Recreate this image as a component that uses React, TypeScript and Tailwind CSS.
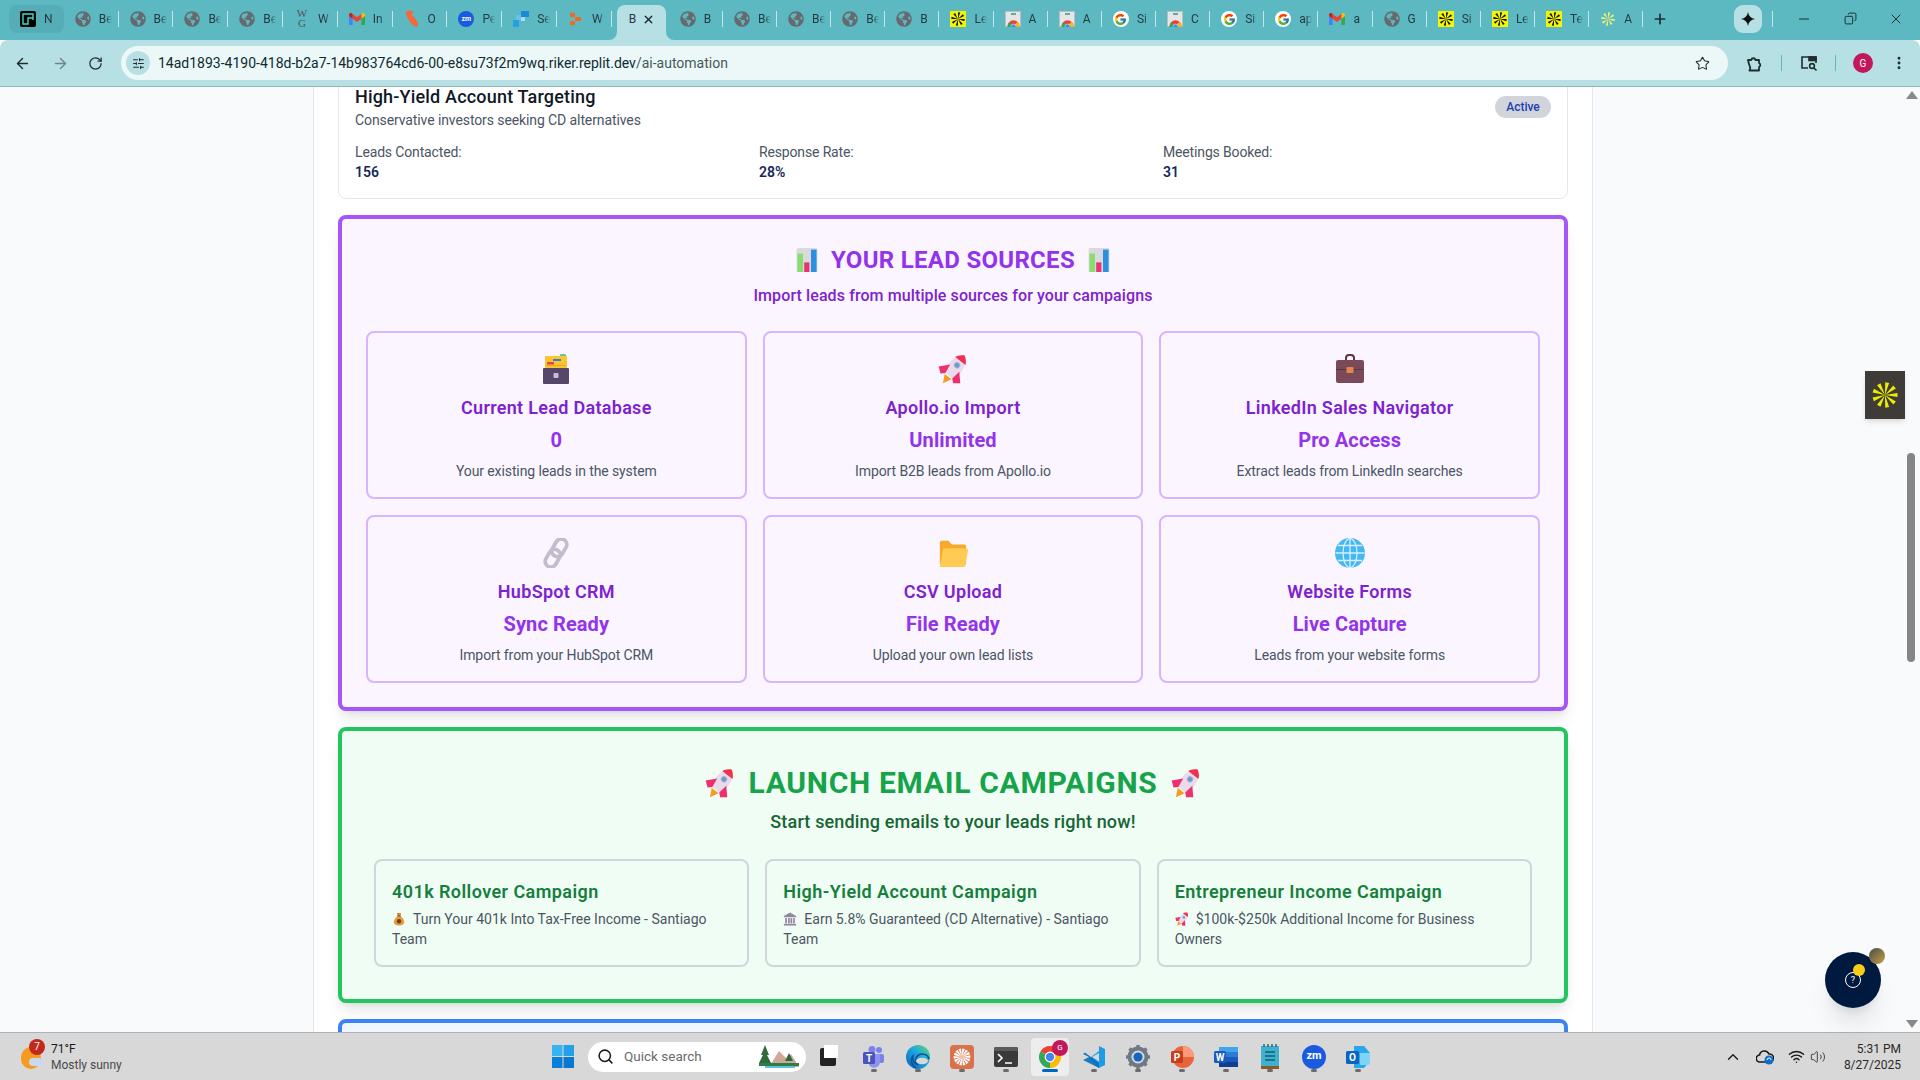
import React from 'react';
import { FaGlobeAmericas } from 'react-icons/fa';
import { FcGoogle } from 'react-icons/fc';
import { ArrowLeft, ArrowRight, RotateCw, Star, MoreVertical, Plus, Minus, X, Copy, ChevronUp, Wifi, Volume2, Search, SlidersHorizontal } from 'lucide-react';

const Spokes = ({ color, size, n = 8, bg }: { color: string; size: number; n?: number; bg?: string }) => (
  <svg width={size} height={size} viewBox="0 0 24 24">
    {bg ? <rect width="24" height="24" fill={bg} /> : null}
    {Array.from({ length: n }).map((_, i) => (
      <polygon key={i} points="12,12 10.4,2 13.6,2" fill={color} transform={`rotate(${(360 / n) * i + 10} 12 12)`} />
    ))}
  </svg>
);

const ChromeLogo = ({ size }: { size: number }) => (
  <svg width={size} height={size} viewBox="0 0 24 24">
    <path d="M12 12L2.47 6.5A11 11 0 0 1 21.53 6.5Z" fill="#ea4335" />
    <path d="M12 12L21.53 6.5A11 11 0 0 1 12 23Z" fill="#fbbc04" />
    <path d="M12 12L12 23A11 11 0 0 1 2.47 6.5Z" fill="#34a853" />
    <circle cx="12" cy="12" r="5.4" fill="#fff" />
    <circle cx="12" cy="12" r="4.2" fill="#4285f4" />
  </svg>
);

const Gmail = ({ size }: { size: number }) => (
  <svg width={size} height={size} viewBox="0 0 24 24">
    <path fill="#4285f4" d="M0 7.64v11.73C0 20.27.73 21 1.64 21h3.82v-9.27z" />
    <path fill="#34a853" d="M18.55 21h3.82c.9 0 1.63-.73 1.63-1.64V7.64l-5.45 4.09z" />
    <path fill="#fbbc04" d="M18.55 4.64v7.09L24 7.64V5.46c0-2.02-2.31-3.18-3.93-1.96z" />
    <path fill="#ea4335" d="M5.46 11.73V4.64L12 9.55l6.55-4.91v7.09L12 16.64z" />
    <path fill="#c5221f" d="M0 5.46v2.18l5.46 4.09V4.64L3.93 3.49C2.31 2.28 0 3.43 0 5.46z" />
  </svg>
);

const Doc = () => (
  <div className="relative w-[16px] h-[16px] bg-[#e6e6e6] border border-[#bdbdbd]">
    <div className="absolute left-[5px] top-[1px] w-[5px] h-[2px] bg-[#5fa8a0]" />
    <svg className="absolute left-[1px] top-[5px]" width="13" height="10" viewBox="0 0 24 18">
      <path d="M1 18A11 11 0 0 1 12 6A11 11 0 0 1 23 18H18A6 6 0 0 0 6 18Z" fill="#ea4335" />
      <path d="M23 18A11 11 0 0 0 19 9L15 13A6 6 0 0 1 18 18Z" fill="#fbbc04" />
      <path d="M1 18A11 11 0 0 1 5 9L9 13A6 6 0 0 0 6 18Z" fill="#34a853" />
      <circle cx="12" cy="17" r="4" fill="#4285f4" />
    </svg>
  </div>
);

const tabIcon = (k: string) => {
  switch (k) {
    case 'n':
      return (
        <div className="w-[16px] h-[16px] bg-black rounded-[2px] flex items-center justify-center">
          <svg width="12" height="12" viewBox="0 0 12 12" fill="none" stroke="#3fd9c8" strokeWidth="1.4"><path d="M11 7V1H1v10h5V5h5" /></svg>
        </div>
      );
    case 'globe':
      return <FaGlobeAmericas size={16} color="#666a6e" />;
    case 'wg':
      return (
        <div className="w-[16px] h-[22px] flex flex-col items-center font-['Liberation_Serif',serif] text-[11px] leading-[10px] text-[#555]">
          <span>W</span>
          <span>G</span>
        </div>
      );
    case 'gmail':
      return <Gmail size={16} />;
    case 'flame':
      return (
        <svg width="16" height="18" viewBox="0 0 16 18"><path d="M2 3C2 1 5 0 8 1C11 2 9 4 7 4C9 6 12 9 14 13C15 16 12 18 10 16C7 13 2 8 2 3Z" fill="#f4683c" /></svg>
      );
    case 'zm':
      return (
        <div className="w-[16px] h-[16px] rounded-full bg-[#1a5ae0] flex items-center justify-center text-white text-[7px] font-bold leading-none">zm</div>
      );
    case 'sq':
      return (
        <svg width="16" height="16" viewBox="0 0 16 16">
          <rect x="8" y="0" width="8" height="6" fill="#1a8ad8" />
          <rect x="3" y="4" width="5" height="5" fill="#6cc0ee" />
          <rect x="0" y="9" width="6" height="7" fill="#2a9fe0" />
          <rect x="8" y="6" width="4" height="4" fill="#a8dcf5" />
        </svg>
      );
    case 'w':
      return (
        <svg width="12" height="12" viewBox="0 0 12 12"><rect x="0" y="0" width="5" height="4" fill="#f26a21" /><rect x="5" y="4" width="6" height="4" fill="#f26a21" /><rect x="0" y="8" width="5" height="4" fill="#f26a21" /></svg>
      );
    case 'yellow':
      return <Spokes color="#111" size={16} bg="#f5f500" />;
    case 'doc':
      return <Doc />;
    case 'g':
      return (
        <div className="w-[16px] h-[16px] rounded-full bg-white flex items-center justify-center"><FcGoogle size={13} /></div>
      );
    case 'ast':
      return <Spokes color="#f2f56a" size={16} />;
    default:
      return null;
  }
};

const tabsBefore = [
  ['n', 'N'], ['globe', 'Be'], ['globe', 'Be'], ['globe', 'Be'], ['globe', 'Be'], ['wg', 'W'], ['gmail', 'In'], ['flame', 'O'], ['zm', 'Pe'], ['sq', 'Se'], ['w', 'W'],
];
const tabsAfter = [
  ['globe', 'B'], ['globe', 'Be'], ['globe', 'Be'], ['globe', 'Be'], ['globe', 'B'], ['yellow', 'Le'], ['doc', 'A'], ['doc', 'A'], ['g', 'Si'], ['doc', 'C'], ['g', 'Si'], ['g', 'ap'], ['gmail', 'a'], ['globe', 'G'], ['yellow', 'Si'], ['yellow', 'Le'], ['yellow', 'Te'], ['ast', 'A'],
];

const Tab = ({ icon, label, w, first }: { icon: string; label: string; w: string; first?: boolean }) => (
  <div className={`${w} h-[28px] flex items-center shrink-0 relative ${first ? 'bg-[#55aeb7] rounded-lg' : ''}`}>
    <div className="w-[16px] h-[16px] ml-[11px] flex items-center justify-center shrink-0">{tabIcon(icon)}</div>
    <span className="ml-[8px] w-[13px] overflow-hidden text-[12px] text-[#27393d] whitespace-nowrap [mask-image:linear-gradient(to_right,#000_55%,transparent)]">{label}</span>
    {first ? null : <span className="absolute right-0 top-[6px] w-[1px] h-[16px] bg-[#c4e6ea]" />}
  </div>
);

const BarChartE = ({ s }: { s: number }) => (
  <svg width={s} height={s} viewBox="3 1 26 30">
    <rect x="3" y="1" width="26" height="30" rx="2" fill="#d9d9de" />
    <rect x="4" y="8" width="7" height="23" fill="#8bdc6e" />
    <rect x="12.5" y="19" width="6.5" height="12" fill="#e6356f" />
    <rect x="21" y="3" width="7" height="28" fill="#2b90e0" />
  </svg>
);
const FileBoxE = ({ s }: { s: number }) => (
  <svg width={s} height={s} viewBox="2 1 28 30">
    <rect x="20" y="1" width="6" height="4" rx="1" fill="#6cc48c" />
    <rect x="5" y="3" width="22" height="15" fill="#fbc531" />
    <rect x="13" y="6" width="8" height="2" fill="#3a7bd5" />
    <rect x="7" y="9" width="7" height="2.5" fill="#e8404f" />
    <rect x="6" y="12" width="20" height="1" fill="#e8a81e" />
    <rect x="3" y="15" width="26" height="16" rx="1" fill="#56466a" />
    <rect x="13.5" y="20" width="5" height="5" rx="1" fill="#c9bcd8" />
  </svg>
);
const RocketE = ({ s }: { s: number }) => (
  <svg width={s} height={s} viewBox="1 2 28 28">
    <g transform="rotate(38 16 16) translate(16 0) scale(1.35 1) translate(-16 0)">
      <path d="M16 0C22 5 22 16 20 24H12C10 16 10 5 16 0Z" fill="#e9dbe9" />
      <path d="M16 0C18.5 2 20 4.5 20.4 6.5H11.6C12 4.5 13.5 2 16 0Z" fill="#f2304f" />
      <ellipse cx="16" cy="11.5" rx="2.2" ry="2.9" fill="#b9a6c6" />
      <ellipse cx="16" cy="11.5" rx="1.5" ry="2" fill="#5aa1e0" />
      <path d="M12 15L6.5 23L10.5 27L13 24Z" fill="#f0306e" />
      <path d="M20 15L25.5 23L21.5 27L19 24Z" fill="#f0306e" />
      <path d="M13 25H19L16 33Z" fill="#f59a23" />
    </g>
  </svg>
);
const BriefcaseE = ({ s }: { s: number }) => (
  <svg width={s} height={s} viewBox="1 2 30 30">
    <path d="M12 9V5.5A3 3 0 0 1 15 3h2a3 3 0 0 1 3 2.5V9" fill="none" stroke="#5b3742" strokeWidth="2" />
    <rect x="2" y="8" width="28" height="23" rx="2" fill="#7b4a5a" />
    <rect x="2" y="17" width="28" height="1" fill="#5b3742" />
    <rect x="12.5" y="15" width="7" height="6" rx="1" fill="#e0894a" />
  </svg>
);
const LinkE = ({ s }: { s: number }) => (
  <svg width={s} height={s} viewBox="0 0 32 32" fill="none" stroke="#c4bccd" strokeWidth="4">
    <rect x="13.5" y="0.5" width="12" height="20" rx="6" transform="rotate(30 19.5 10.5)" />
    <rect x="6.5" y="11.5" width="12" height="20" rx="6" transform="rotate(30 12.5 21.5)" />
  </svg>
);
const FolderE = ({ s }: { s: number }) => (
  <svg width={s} height={s} viewBox="0 0 32 32">
    <path d="M2 5a2 2 0 0 1 2-2h7l4 4h13a2 2 0 0 1 2 2v18a2 2 0 0 1-2 2H4a2 2 0 0 1-2-2Z" fill="#f7a92b" />
    <path d="M5 13a2 2 0 0 1 2-2h23a2 2 0 0 1 2 2l-3 16a2 2 0 0 1-2 2H2Z" fill="#ffcb52" />
  </svg>
);
const GlobeE = ({ s }: { s: number }) => (
  <svg width={s} height={s} viewBox="1 1 30 30" fill="none" stroke="#d4f1fd" strokeWidth="1.3">
    <circle cx="16" cy="16" r="15" fill="#45b7f2" stroke="none" />
    <ellipse cx="16" cy="16" rx="7" ry="14.5" />
    <path d="M16 1.5v29M1.5 16h29M4 8.5h24M4 23.5h24" />
  </svg>
);
const MoneyE = ({ s }: { s: number }) => (
  <svg width={s} height={s} viewBox="0 0 32 32">
    <path d="M11 2h10l-2 7h-6Z" fill="#d98a3a" />
    <path d="M13 9h6c6 4 9 10 9 14 0 5-4 8-12 8S4 28 4 23c0-4 3-10 9-14Z" fill="#e99a3c" />
    <rect x="12" y="8" width="8" height="2" fill="#7a4a20" />
    <circle cx="16" cy="21" r="5" fill="#6b3f18" />
  </svg>
);
const BankE = ({ s }: { s: number }) => (
  <svg width={s} height={s} viewBox="0 0 32 32" fill="#93889f">
    <path d="M16 1L30 9V12H2V9Z" />
    <rect x="5" y="14" width="4" height="12" />
    <rect x="11.5" y="14" width="4" height="12" />
    <rect x="17" y="14" width="4" height="12" />
    <rect x="23" y="14" width="4" height="12" />
    <rect x="2" y="27" width="28" height="4" />
  </svg>
);

const sources = [
  { e: <FileBoxE s={30} />, t: 'Current Lead Database', v: '0', d: 'Your existing leads in the system' },
  { e: <RocketE s={30} />, t: 'Apollo.io Import', v: 'Unlimited', d: 'Import B2B leads from Apollo.io' },
  { e: <BriefcaseE s={30} />, t: 'LinkedIn Sales Navigator', v: 'Pro Access', d: 'Extract leads from LinkedIn searches' },
  { e: <LinkE s={30} />, t: 'HubSpot CRM', v: 'Sync Ready', d: 'Import from your HubSpot CRM' },
  { e: <FolderE s={30} />, t: 'CSV Upload', v: 'File Ready', d: 'Upload your own lead lists' },
  { e: <GlobeE s={30} />, t: 'Website Forms', v: 'Live Capture', d: 'Leads from your website forms' },
];

const campaigns = [
  { t: '401k Rollover Campaign', e: <MoneyE s={14} />, d: 'Turn Your 401k Into Tax-Free Income - Santiago Team' },
  { t: 'High-Yield Account Campaign', e: <BankE s={14} />, d: 'Earn 5.8% Guaranteed (CD Alternative) - Santiago Team' },
  { t: 'Entrepreneur Income Campaign', e: <RocketE s={14} />, d: '$100k-$250k Additional Income for Business Owners' },
];

const stats = [['Leads Contacted:', '156'], ['Response Rate:', '28%'], ['Meetings Booked:', '31']];

const Corner = ({ flip }: { flip?: boolean }) => (
  <svg className={`absolute bottom-0 ${flip ? 'right-[-8px] -scale-x-100' : 'left-[-8px]'}`} width="8" height="8" viewBox="0 0 8 8">
    <path d="M8 0V8H0A8 8 0 0 0 8 0Z" fill="#b7e0e4" />
  </svg>
);

const Dot = ({ active }: { active?: boolean }) => (
  <span className={`absolute bottom-[4px] left-1/2 -translate-x-1/2 h-[3px] rounded-full ${active ? 'w-[16px] bg-[#0067c0]' : 'w-[6px] bg-[#6b6b6b]'}`} />
);

const TaskIcon = ({ children, active }: { children: React.ReactNode; active?: boolean }) => (
  <div className={`relative w-[38px] h-[38px] mx-[3px] flex items-center justify-center rounded-[4px] shrink-0 ${active ? 'bg-[#ededed]' : ''}`}>
    {children}
    <Dot active={active} />
  </div>
);

export default function App() {
  return (
    <div className="w-[1920px] h-[1080px] flex flex-col overflow-hidden font-['Roboto',sans-serif] bg-white">
      {/* tab strip */}
      <div className="h-[40px] bg-[#5cb9c2] flex items-start pt-[5px] pl-[9px] shrink-0">
        {tabsBefore.map(([i, l], n) => (
          <Tab key={n} icon={i} label={l} w="w-[54.8px]" first={n === 0} />
        ))}
        <div className="relative w-[49px] ml-[5px] mr-[3px] h-[35px] bg-[#b7e0e4] rounded-t-lg flex items-start pt-[6px] shrink-0">
          <Corner />
          <Corner flip />
          <span className="ml-[12px] w-[11px] overflow-hidden text-[12px] leading-[16px] text-[#27393d]">B</span>
          <X size={13} className="ml-[2px] mt-[2px] text-[#1c2b2e]" strokeWidth={2.5} />
        </div>
        {tabsAfter.map(([i, l], n) => (
          <Tab key={n} icon={i} label={l} w="w-[54.15px]" />
        ))}
        <Plus size={16} strokeWidth={2.5} className="ml-[9px] mt-[6px] text-[#1f2d30] shrink-0" />
        <div className="ml-[66px] w-[28px] h-[28px] rounded-[9px] bg-[#b7e0e4] flex items-center justify-center shrink-0">
          <svg width="14" height="14" viewBox="0 0 14 14"><path d="M7 0C7.6 4 10 6.4 14 7C10 7.6 7.6 10 7 14C6.4 10 4 7.6 0 7C4 6.4 6.4 4 7 0Z" fill="#111" /></svg>
        </div>
        <span className="ml-[10px] mt-[6px] w-[1px] h-[16px] bg-[#c4e6ea] shrink-0" />
        <Minus size={16} className="ml-[23px] mt-[6px] text-[#1f2d30] shrink-0" strokeWidth={1.5} />
        <Copy size={13} className="ml-[32px] mt-[7px] text-[#1f2d30] shrink-0 -scale-x-100" strokeWidth={1.8} />
        <X size={16} className="ml-[31px] mt-[6px] text-[#1f2d30] shrink-0" strokeWidth={1.5} />
      </div>

      {/* toolbar */}
      <div className="h-[47px] bg-[#b7e0e4] border-b border-[#8fb5b9] flex items-center shrink-0 rounded-t-[8px]">
        <ArrowLeft size={17} className="ml-[14px] text-[#1f2d30]" strokeWidth={2} />
        <ArrowRight size={17} className="ml-[21px] text-[#6b8589]" strokeWidth={2} />
        <RotateCw size={15} className="ml-[19px] text-[#1f2d30]" strokeWidth={2} />
        <div className="ml-[18px] w-[1607px] h-[34px] bg-[#ecf8f8] rounded-full flex items-center">
          <div className="ml-[5px] w-[24px] h-[24px] rounded-full bg-[#b7e0e4] flex items-center justify-center">
            <SlidersHorizontal size={13} className="text-[#1f2d30]" />
          </div>
          <span className="ml-[8px] text-[14px] text-[#0f2a30] whitespace-nowrap">
            14ad1893-4190-418d-b2a7-14b983764cd6-00-e8su73f2m9wq.riker.replit.dev<span className="text-[#45585c]">/ai-automation</span>
          </span>
          <Star size={15} className="ml-auto mr-[18px] text-[#1f2d30]" strokeWidth={1.7} />
        </div>
        <svg className="ml-[18px]" width="17" height="17" viewBox="0 0 17 17" fill="none" stroke="#1f2d30" strokeWidth="1.8" strokeLinejoin="round">
          <path d="M2 5h3.2a2.2 2.2 0 0 1 4.3 0H13v3a2.2 2.2 0 0 1 0 4v3.5H3.5c1-2 1-3.5 0-5.2C2.8 9 2.4 7 2 5Z" />
        </svg>
        <span className="ml-[18px] w-[1px] h-[16px] bg-[#5cb9c2]" />
        <svg className="ml-[18px]" width="18" height="16" viewBox="0 0 18 16" fill="none" stroke="#1f2d30" strokeWidth="1.6">
          <path d="M8 13H2V2h14v6" />
          <rect x="9" y="2" width="7" height="3.5" fill="#1f2d30" />
          <circle cx="12" cy="11" r="2.4" />
          <path d="M14 13l2.5 2.5" />
        </svg>
        <span className="ml-[17px] w-[1px] h-[16px] bg-[#5cb9c2]" />
        <div className="ml-[17px] w-[20px] h-[20px] rounded-full bg-[#c2185b] flex items-center justify-center text-white text-[10px]">G</div>
        <MoreVertical size={16} className="ml-[18px] text-[#1f2d30]" strokeWidth={2.4} />
      </div>

      {/* page */}
      <div className="flex-1 min-h-0 flex relative bg-[#f9fafb]">
        <div className="w-[313px] shrink-0" />
        <main className="w-[1280px] shrink-0 bg-white border-x border-[#e5e7eb] px-6 overflow-hidden">
          <div className="-mt-[21px] flex flex-col gap-4">
            <div className="border border-[#e5e7eb] rounded-lg p-4 bg-white">
              <div className="flex items-center justify-between mb-3">
                <div>
                  <h3 className="text-lg font-medium text-[#111827] leading-[28px] tracking-[0.18px]">High-Yield Account Targeting</h3>
                  <p className="text-sm text-[#4b5563] -mt-[1px] tracking-[-0.1px]">Conservative investors seeking CD alternatives</p>
                </div>
                <span className="h-[22px] w-[56px] rounded-full bg-[#d1d5db] text-[#1e40af] text-xs font-medium flex items-center justify-center">Active</span>
              </div>
              <div className="grid grid-cols-3 gap-4 text-sm">
                {stats.map(([a, b]) => (
                  <div key={a}>
                    <div className="text-[#4b5563] tracking-[-0.15px]">{a}</div>
                    <div className="font-semibold text-[#14285a]">{b}</div>
                  </div>
                ))}
              </div>
            </div>

            <section className="border-4 border-[#a855f7] bg-[#faf5ff] rounded-lg p-6 shadow-lg">
              <h2 className="text-2xl font-bold text-[#9333ea] flex items-center justify-center gap-3 mb-2 pt-[1px] tracking-[0.3px]">
                <BarChartE s={24} /> YOUR LEAD SOURCES <BarChartE s={24} />
              </h2>
              <p className="text-center font-medium text-[#7e22ce] mb-[23px] tracking-[0.1px]">Import leads from multiple sources for your campaigns</p>
              <div className="grid grid-cols-3 gap-4">
                {sources.map((s) => (
                  <div key={s.t} className="border-2 border-[#d8b4fe] rounded-lg p-4 text-center h-[168px]">
                    <div className="h-[36px] mb-[9px] pt-[3px] flex items-center justify-center">{s.e}</div>
                    <div className="text-lg font-semibold text-[#7e22ce] mb-1 tracking-[0.3px]">{s.t}</div>
                    <div className="text-xl font-bold text-[#9333ea] mb-[7px] tracking-[0.1px]">{s.v}</div>
                    <div className="text-sm text-[#4b5563] tracking-[-0.1px]">{s.d}</div>
                  </div>
                ))}
              </div>
            </section>

            <section className="border-4 border-[#22c55e] bg-[#f0fdf4] rounded-lg p-8 shadow-lg">
              <h2 className="text-3xl font-bold text-[#16a34a] flex items-center justify-center gap-[13px] mb-[7px] pt-[2px] tracking-[0.7px]">
                <RocketE s={30} /> LAUNCH EMAIL CAMPAIGNS <RocketE s={30} />
              </h2>
              <p className="text-center text-lg font-medium text-[#166534] mb-[23px] tracking-[0.16px]">Start sending emails to your leads right now!</p>
              <div className="grid grid-cols-3 gap-4">
                {campaigns.map((c) => (
                  <div key={c.t} className="border-2 border-[#d1d5db] rounded-lg p-4 h-[108px]">
                    <div className="text-lg font-semibold text-[#15803d] pt-[1px] tracking-[0.43px]">{c.t}</div>
                    <p className="text-sm text-[#4b5563] mt-[3px]">
                      <span className="inline-block align-[-2px] mr-[7px]">{c.e}</span>
                      {c.d}
                    </p>
                  </div>
                ))}
              </div>
            </section>

            <section className="border-4 border-[#3b82f6] bg-[#eff6ff] rounded-lg h-[200px]" />
          </div>
        </main>
        <div className="flex-1" />
        <div className="w-[17px] shrink-0 flex flex-col items-center justify-between py-[4px] relative">
          <span className="w-0 h-0 border-x-[6px] border-x-transparent border-b-[8px] border-b-[#8a8a8a]" />
          <span className="absolute left-[4px] top-[366px] w-[8px] h-[209px] rounded-full bg-[#858585]" />
          <span className="w-0 h-0 border-x-[6px] border-x-transparent border-t-[8px] border-t-[#8a8a8a]" />
        </div>

        {/* floating widgets */}
        <div className="absolute left-[1865px] top-[284px] w-[40px] h-[48px] bg-[#3f3b38] shadow-md flex items-center justify-center">
          <Spokes color="#ecec00" size={30} n={9} />
        </div>
        <div className="absolute left-[1825px] top-[865px] w-[56px] h-[56px] rounded-full bg-[#001a3f] shadow-xl flex items-center justify-center">
          <div className="relative w-[16px] h-[16px] rounded-full border border-white flex items-center justify-center text-white text-[9px] leading-none">
            ?
            <span className="absolute left-[7px] top-[-9px] w-[12px] h-[12px] rounded-full bg-[#facc15]" />
          </div>
          <span className="absolute right-[-4px] top-[-4px] w-[16px] h-[16px] rounded-full bg-gradient-to-br from-[#4a4a48] to-[#c9a13c]" />
        </div>
      </div>

      {/* taskbar */}
      <div className="h-[48px] bg-[#d8d8d8] border-t border-[#b0b0b0] flex items-center shrink-0">
        <div className="relative ml-[21px] w-[24px] h-[24px] shrink-0">
          <span className="absolute left-0 top-[2px] w-[20px] h-[22px] rounded-full bg-[#f59a23]" />
          <span className="absolute left-[8px] top-[13px] w-[14px] h-[8px] rounded-full bg-[#c9d9ee]" />
          <span className="absolute left-[8px] top-[-6px] w-[16px] h-[16px] rounded-full bg-[#c4281c] text-white text-[10px] flex items-center justify-center">7</span>
        </div>
        <div className="ml-[6px] w-[72px] shrink-0 text-[12px] leading-[16px]">
          <div className="text-[#1a1a1a]">71°F</div>
          <div className="text-[#4a4a4a] whitespace-nowrap">Mostly sunny</div>
        </div>
        <svg className="ml-[429px] shrink-0" width="22" height="23" viewBox="0 0 22 23">
          <rect x="0" y="0" width="10.5" height="11" fill="#35b4f0" />
          <rect x="11.5" y="0" width="10.5" height="11" fill="#22a0e8" />
          <rect x="0" y="12" width="10.5" height="11" fill="#0a7fd8" />
          <rect x="11.5" y="12" width="10.5" height="11" fill="#0a78d0" />
        </svg>
        <div className="ml-[14px] w-[218px] h-[30px] bg-white rounded-full flex items-center shrink-0">
          <Search size={17} className="ml-[9px] text-[#1a1a1a]" strokeWidth={2.2} />
          <span className="ml-[10px] text-[13.5px] text-[#6b6b6b]">Quick search</span>
          <svg className="ml-auto mr-[7px]" width="40" height="24" viewBox="0 0 40 24">
            <path d="M10 22L20 6L28 14L32 9L40 22Z" fill="#cfa89a" />
            <path d="M6 0L10 10L8 10L12 18H0L4 10H2Z" fill="#2f6b3a" />
            <path d="M30 8L34 16H26Z" fill="#2f6b3a" />
            <rect x="0" y="18" width="40" height="3" fill="#2e7d4a" />
            <rect x="6" y="21" width="30" height="2" fill="#58c5d8" />
          </svg>
        </div>
        <div className="ml-[14px] w-[24px] h-[24px] flex items-center shrink-0">
          <div className="relative w-[16px] h-[18px] bg-[#222] rounded-[2px]"><span className="absolute left-[4px] top-[-3px] w-[14px] h-[13px] bg-white" /></div>
        </div>
        <div className="flex items-center ml-[8px] shrink-0">
          <TaskIcon>
            <svg width="24" height="24" viewBox="0 0 24 24">
              <circle cx="17" cy="5" r="3" fill="#7b83eb" />
              <circle cx="10" cy="4.5" r="3.5" fill="#7b83eb" />
              <rect x="6" y="9" width="16" height="9" rx="2" fill="#7b83eb" />
              <path d="M7 9h11v8a6 6 0 0 1-11 3Z" fill="#8d93ef" />
              <rect x="1" y="7" width="12" height="12" rx="1.5" fill="#4b53bc" />
              <text x="7" y="16.5" fontSize="10" fontWeight="700" textAnchor="middle" fill="#fff">T</text>
            </svg>
          </TaskIcon>
          <TaskIcon>
            <svg width="24" height="24" viewBox="0 0 24 24">
              <defs>
                <linearGradient id="edge" x1="0" y1="1" x2="1" y2="0">
                  <stop offset="0" stopColor="#0a5fb4" />
                  <stop offset="0.55" stopColor="#1da7e0" />
                  <stop offset="1" stopColor="#5fd86f" />
                </linearGradient>
              </defs>
              <circle cx="12" cy="12" r="12" fill="url(#edge)" />
              <path d="M23 14C22 9 16 8 12.5 10C9 12 8.5 17 12 20C8 19 6 15 7 11C4 14 5 20 10 23" fill="none" stroke="#0b4f9a" strokeWidth="1.5" />
              <ellipse cx="16" cy="16" rx="6" ry="3.2" fill="#d8d8d8" />
            </svg>
          </TaskIcon>
          <TaskIcon>
            <div className="w-[24px] h-[24px] rounded-[4px] bg-[#d9714a] flex items-center justify-center">
              <Spokes color="#fff" size={20} n={14} />
            </div>
          </TaskIcon>
          <TaskIcon>
            <div className="w-[24px] h-[20px] rounded-[2px] bg-[#3a3a3a] flex flex-col">
              <div className="h-[4px] bg-[#5a5a5a] rounded-t-[2px]" />
              <svg width="24" height="16" viewBox="0 0 24 16" fill="none" stroke="#fff" strokeWidth="1.6"><path d="M4 3l4 4-4 4M11 12h7" /></svg>
            </div>
          </TaskIcon>
          <TaskIcon active>
            <ChromeLogo size={24} />
            <span className="absolute right-[1px] top-[2px] w-[16px] h-[16px] rounded-full bg-[#c2185b] text-white text-[8px] flex items-center justify-center">G</span>
          </TaskIcon>
          <TaskIcon>
            <svg width="24" height="24" viewBox="0 0 24 24">
              <path d="M17 1L23 4V20L17 23L7 13.5L17 6Z M17 8L10 12L17 16.5Z" fill="#1e9be6" fillRule="evenodd" />
              <path d="M1 9L3 7.5L17 18V23L1 15L7 12Z" fill="#0a6fbd" opacity="0.9" />
            </svg>
          </TaskIcon>
          <TaskIcon>
            <svg width="24" height="24" viewBox="0 0 24 24">
              <circle cx="12" cy="12" r="8.5" fill="none" stroke="#6d7a86" strokeWidth="4" />
              <circle cx="12" cy="12" r="4.6" fill="#1565c0" />
              <path d="M12 0v5M12 19v5M0 12h5M19 12h5M3.5 3.5l3.5 3.5M17 17l3.5 3.5M3.5 20.5L7 17M17 7l3.5-3.5" stroke="#6d7a86" strokeWidth="3.4" />
            </svg>
          </TaskIcon>
          <TaskIcon>
            <svg width="24" height="24" viewBox="0 0 24 24">
              <circle cx="13" cy="12" r="11" fill="#e8643a" />
              <path d="M13 1a11 11 0 0 1 11 11H13Z" fill="#ff9a7a" />
              <rect x="1" y="6" width="12" height="12" rx="1.5" fill="#c43e1c" />
              <text x="7" y="15.5" fontSize="10" fontWeight="700" textAnchor="middle" fill="#fff">P</text>
            </svg>
          </TaskIcon>
          <TaskIcon>
            <svg width="24" height="24" viewBox="0 0 24 24">
              <rect x="5" y="2" width="19" height="5" fill="#41a5ee" />
              <rect x="5" y="7" width="19" height="5" fill="#2b7cd3" />
              <rect x="5" y="12" width="19" height="5" fill="#185abd" />
              <rect x="5" y="17" width="19" height="5" fill="#103f91" />
              <rect x="0" y="6" width="12" height="12" rx="1.5" fill="#185abd" />
              <text x="6" y="15.5" fontSize="10" fontWeight="700" textAnchor="middle" fill="#fff">W</text>
            </svg>
          </TaskIcon>
          <TaskIcon>
            <svg width="24" height="26" viewBox="0 0 24 26">
              <rect x="3" y="2" width="18" height="20" fill="#3fb1cf" />
              <rect x="3" y="22" width="18" height="3" fill="#8a5a2b" />
              <path d="M6 0v3M10 0v3M14 0v3M18 0v3" stroke="#27606f" strokeWidth="1.4" />
              <path d="M7 8h10M7 12h10M7 16h10" stroke="#0f5c73" strokeWidth="1.6" />
            </svg>
          </TaskIcon>
          <TaskIcon>
            <div className="w-[24px] h-[24px] rounded-full bg-[#1a5ae0] flex items-center justify-center text-white text-[11px] font-bold">zm</div>
          </TaskIcon>
          <TaskIcon>
            <svg width="24" height="24" viewBox="0 0 24 24">
              <path d="M8 1h10l6 7v8L18 23H8Z" fill="#28a8ea" />
              <path d="M14 8h10v10a2 2 0 0 1-2 2H14Z" fill="#7fd3f5" />
              <rect x="0" y="6" width="13" height="13" rx="1.5" fill="#0a64c0" />
              <text x="6.5" y="16" fontSize="10" fontWeight="700" textAnchor="middle" fill="#fff">O</text>
            </svg>
          </TaskIcon>
        </div>
        <ChevronUp size={18} className="ml-[344px] text-[#1a1a1a] shrink-0" strokeWidth={1.8} />
        <svg className="ml-[14px] shrink-0" width="18" height="16" viewBox="0 0 18 16">
          <path d="M4 13a3.5 3.5 0 0 1-.5-7A5 5 0 0 1 13 5a4 4 0 0 1 1 8Z" fill="#d8d8d8" stroke="#1a1a1a" strokeWidth="1.6" />
          <circle cx="13" cy="11" r="4.5" fill="#0f6cc9" />
          <path d="M11 11a2 2 0 0 1 4 0" stroke="#fff" fill="none" />
        </svg>
        <Wifi size={17} className="ml-[14px] text-[#1a1a1a] shrink-0" />
        <Volume2 size={16} className="ml-[5px] text-[#3a3a3a] shrink-0" strokeWidth={1.4} />
        <div className="ml-auto mr-[19px] text-right text-[12px] leading-[16px] text-[#2a2a2a]">
          <div>5:31 PM</div>
          <div>8/27/2025</div>
        </div>
      </div>
    </div>
  );
}
